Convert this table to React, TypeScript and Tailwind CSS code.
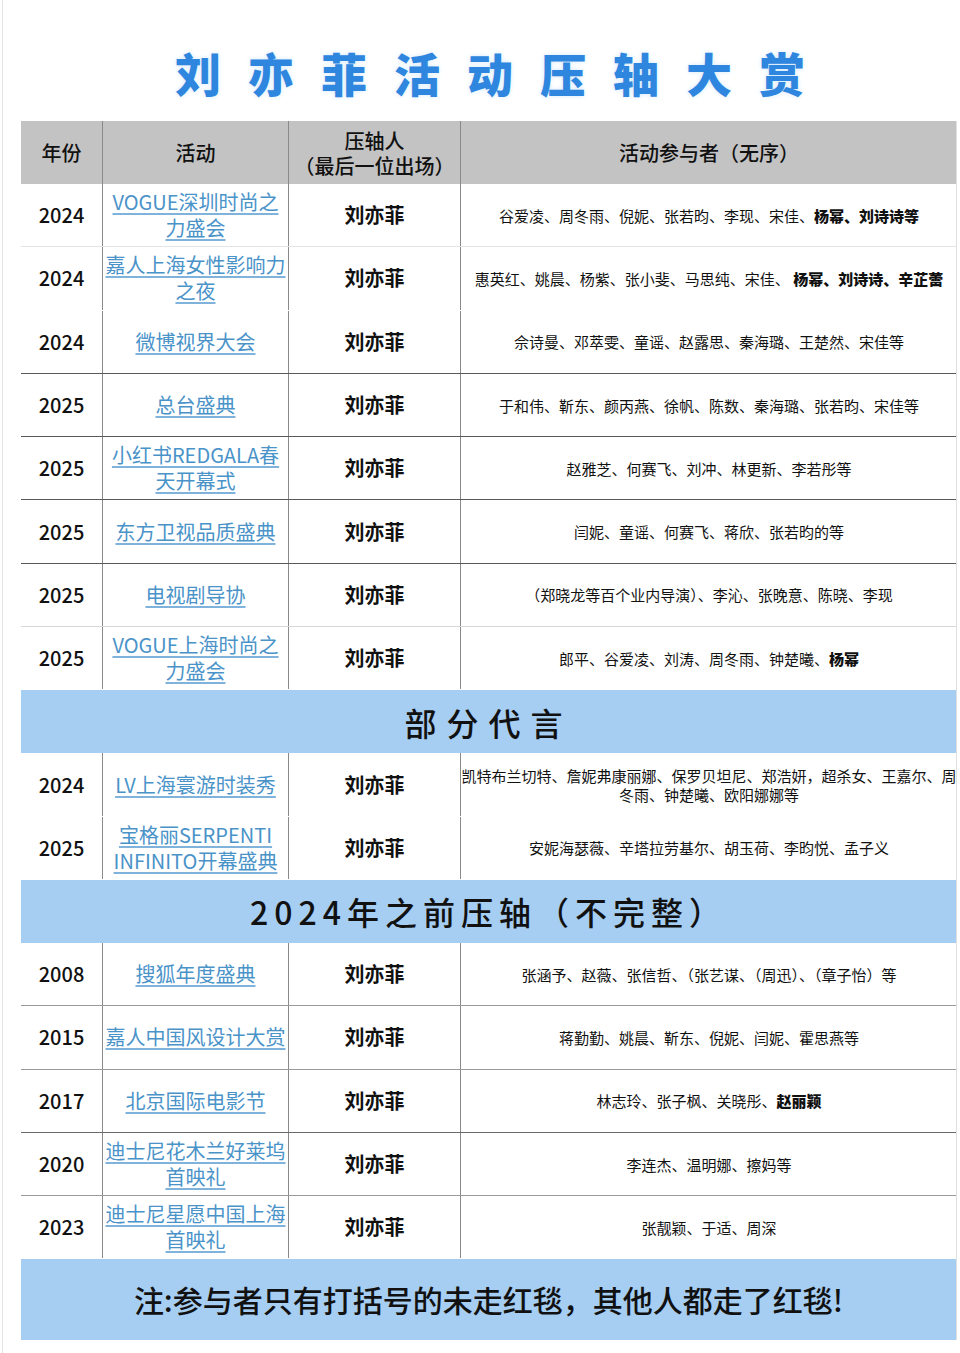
import type { ReactNode } from "react";

type Row = {
  year: string;
  event: string[];
  people: ReactNode;
  line: string;
};

const FONT = '"Noto Sans CJK SC", "Noto Sans", sans-serif';

const mainRows: Row[] = [
  {
    year: "2024",
    event: ["VOGUE深圳时尚之", "力盛会"],
    people: (
      <>
        谷爱凌、周冬雨、倪妮、张若昀、李现、宋佳、<b className="font-black">杨幂、刘诗诗等</b>
      </>
    ),
    line: "border-[#e4e4e4]",
  },
  {
    year: "2024",
    event: ["嘉人上海女性影响力", "之夜"],
    people: (
      <>
        惠英红、姚晨、杨紫、张小斐、马思纯、宋佳、 <b className="font-black">杨幂、刘诗诗、辛芷蕾</b>
      </>
    ),
    line: "border-transparent",
  },
  { year: "2024", event: ["微博视界大会"], people: "佘诗曼、邓萃雯、童谣、赵露思、秦海璐、王楚然、宋佳等", line: "border-[#5a5a5a]" },
  { year: "2025", event: ["总台盛典"], people: "于和伟、靳东、颜丙燕、徐帆、陈数、秦海璐、张若昀、宋佳等", line: "border-[#5a5a5a]" },
  { year: "2025", event: ["小红书REDGALA春", "天开幕式"], people: "赵雅芝、何赛飞、刘冲、林更新、李若彤等", line: "border-[#5a5a5a]" },
  { year: "2025", event: ["东方卫视品质盛典"], people: "闫妮、童谣、何赛飞、蒋欣、张若昀的等", line: "border-[#5a5a5a]" },
  { year: "2025", event: ["电视剧导协"], people: "（郑晓龙等百个业内导演）、李沁、张晚意、陈晓、李现", line: "border-[#d8d8d8]" },
  {
    year: "2025",
    event: ["VOGUE上海时尚之", "力盛会"],
    people: (
      <>
        郎平、谷爱凌、刘涛、周冬雨、钟楚曦、<b className="font-black">杨幂</b>
      </>
    ),
    line: "border-transparent",
  },
];

const adRows: Row[] = [
  {
    year: "2024",
    event: ["LV上海寰游时装秀"],
    people: "凯特布兰切特、詹妮弗康丽娜、保罗贝坦尼、郑浩妍，超杀女、王嘉尔、周冬雨、钟楚曦、欧阳娜娜等",
    line: "border-transparent",
  },
  { year: "2025", event: ["宝格丽SERPENTI", "INFINITO开幕盛典"], people: "安妮海瑟薇、辛塔拉劳基尔、胡玉荷、李昀悦、孟子义", line: "border-transparent" },
];

const oldRows: Row[] = [
  { year: "2008", event: ["搜狐年度盛典"], people: "张涵予、赵薇、张信哲、（张艺谋、（周迅）、（章子怡）等", line: "border-[#9a9a9a]" },
  { year: "2015", event: ["嘉人中国风设计大赏"], people: "蒋勤勤、姚晨、靳东、倪妮、闫妮、霍思燕等", line: "border-[#9a9a9a]" },
  {
    year: "2017",
    event: ["北京国际电影节"],
    people: (
      <>
        林志玲、张子枫、关晓彤、<b className="font-black">赵丽颖</b>
      </>
    ),
    line: "border-[#6a6a6a]",
  },
  { year: "2020", event: ["迪士尼花木兰好莱坞", "首映礼"], people: "李连杰、温明娜、擦妈等", line: "border-[#9a9a9a]" },
  { year: "2023", event: ["迪士尼星愿中国上海", "首映礼"], people: "张靓颖、于适、周深", line: "border-transparent" },
];

const COLS = "grid grid-cols-[82px_186px_172px_496px]";

function TableRow({ row }: { row: Row }) {
  return (
    <div className={`${COLS} h-[63.3px] border-b ${row.line} bg-white`}>
      <div className="flex items-center justify-center border-r border-[#8a8a8a] text-[20px] font-medium text-[#111]">
        {row.year}
      </div>
      <div className="flex flex-col items-center justify-center border-r border-[#8a8a8a] text-[20px] leading-[26px] text-[#4a93c9]">
        {row.event.map((line) => (
          <span key={line} className="whitespace-nowrap underline decoration-[#7fb3dc] underline-offset-[3px]">
            {line}
          </span>
        ))}
      </div>
      <div className="flex items-center justify-center border-r border-[#8a8a8a] text-[20px] font-bold text-[#111]">
        刘亦菲
      </div>
      <div className="flex items-center justify-center text-center text-[15px] leading-[19px] text-[#111]">
        <p>{row.people}</p>
      </div>
    </div>
  );
}

function SectionBar({ children, className }: { children: ReactNode; className: string }) {
  return (
    <div className={`flex h-[63px] items-center justify-center bg-[#a6cdf2] text-[32px] font-medium text-[#111] ${className}`}>
      {children}
    </div>
  );
}

export default function App() {
  return (
    <div className="min-h-[1353px] w-[960px] bg-white" style={{ fontFamily: FONT }}>
      <div className="ml-[2px] min-h-[1353px] border-l border-[#e4e4e4] pl-[18px]">
        <h1 className="flex h-[121px] items-center justify-center pl-[26px] pt-[24px] text-[46px] font-black tracking-[27px] text-[#2e86de] [text-shadow:0_0_5px_#d4e9fb]">
          刘亦菲活动压轴大赏
        </h1>

        <div className="w-[936px] border-r border-[#e0e0e0]">
          <div className={`${COLS} h-[63px] bg-[#c3c3c3] text-[20px] font-medium text-[#111]`}>
            <div className="flex items-center justify-center border-r border-[#8a8a8a]">年份</div>
            <div className="flex items-center justify-center border-r border-[#8a8a8a]">活动</div>
            <div className="flex flex-col items-center justify-center border-r border-[#8a8a8a] leading-[25px]">
              <span>压轴人</span>
              <span>（最后一位出场）</span>
            </div>
            <div className="flex items-center justify-center">活动参与者（无序）</div>
          </div>

          {mainRows.map((row, i) => (
            <TableRow key={`m${i}`} row={row} />
          ))}

          <SectionBar className="tracking-[10px]">部分代言</SectionBar>

          {adRows.map((row, i) => (
            <TableRow key={`a${i}`} row={row} />
          ))}

          <SectionBar className="tracking-[6px]">2024年之前压轴（不完整）</SectionBar>

          {oldRows.map((row, i) => (
            <TableRow key={`o${i}`} row={row} />
          ))}

          <div className="flex h-[81px] items-center justify-center bg-[#a6cdf2] text-[30px] font-medium text-[#111]">
            注:参与者只有打括号的未走红毯，其他人都走了红毯!
          </div>
        </div>
      </div>
    </div>
  );
}
